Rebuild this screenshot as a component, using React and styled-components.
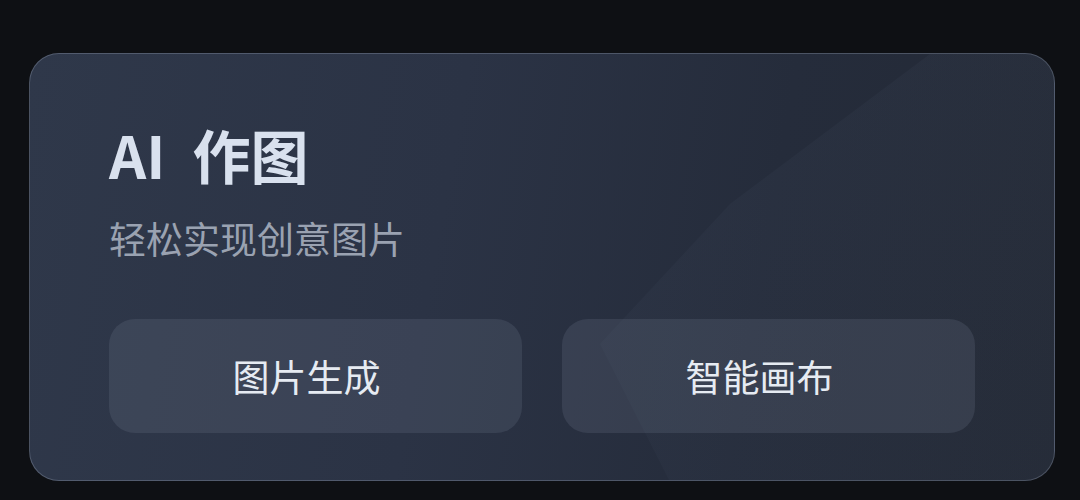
import React from "react";
import styled, { createGlobalStyle } from "styled-components";

const Global = createGlobalStyle`
  html, body { margin: 0; padding: 0; background: #0e1014; }
  body { font-family: "Noto Sans CJK SC", "Noto Sans", sans-serif; }
`;

const Page = styled.div`
  width: 1080px;
  height: 500px;
  box-sizing: border-box;
  padding: 53px 25px 19px 29px;
  background: #0e1014;
`;

const Card = styled.section`
  position: relative;
  overflow: hidden;
  box-sizing: border-box;
  width: 1026px;
  height: 428px;
  padding: 62px 79px 47px 79px;
  border-radius: 30px;
  border: 1px solid rgba(150, 160, 180, 0.35);
  background: linear-gradient(100deg, #2f384a 0%, #2b3345 40%, #252c3b 70%, #232935 100%);
  display: flex;
  flex-direction: column;

  &::before {
    content: "";
    position: absolute;
    inset: 0;
    clip-path: polygon(900px 0, 1026px 0, 1026px 428px, 640px 428px, 570px 290px, 700px 150px);
    background: linear-gradient(160deg, rgba(90, 102, 125, 0.10), rgba(90, 102, 125, 0.05));
    pointer-events: none;
  }
`;

const Title = styled.h1`
  margin: 0;
  font-size: 58px;
  line-height: 76px;
  font-weight: 700;
  word-spacing: 14px;
  color: #d9e1ee;
  font-family: "Noto Sans CJK SC", sans-serif;
  position: relative;
`;

const Subtitle = styled.p`
  margin: 20px 0 0;
  font-size: 37px;
  line-height: 52px;
  color: #9aa2b1;
  font-family: "Noto Sans CJK SC", sans-serif;
  position: relative;
`;

const Actions = styled.div`
  margin-top: auto;
  display: grid;
  grid-template-columns: 1fr 1fr;
  gap: 40px;
  position: relative;
`;

const ActionButton = styled.button`
  height: 114px;
  border: none;
  border-radius: 26px;
  background: rgba(120, 132, 152, 0.2);
  color: #e6ebf2;
  font-size: 37px;
  font-family: "Noto Sans CJK SC", sans-serif;
  font-weight: 400;
  cursor: pointer;
  display: flex;
  align-items: center;
  justify-content: center;
  padding: 0 18px 0 0;
`;

export default function App() {
  return (
    <>
      <Global />
      <Page>
        <Card>
          <Title>AI 作图</Title>
          <Subtitle>轻松实现创意图片</Subtitle>
          <Actions>
            <ActionButton>图片生成</ActionButton>
            <ActionButton>智能画布</ActionButton>
          </Actions>
        </Card>
      </Page>
    </>
  );
}
